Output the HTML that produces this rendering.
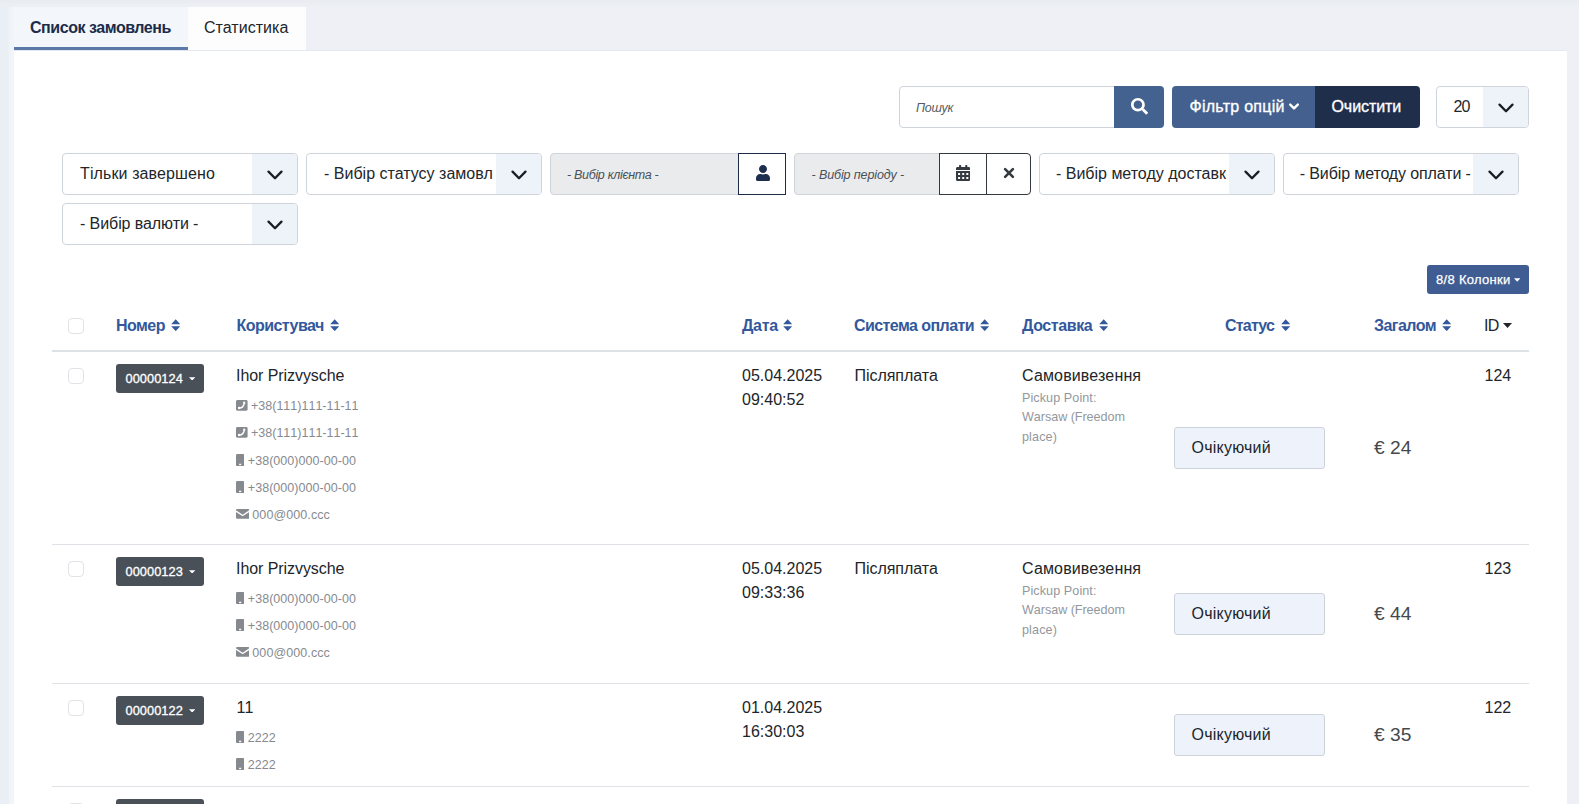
<!DOCTYPE html>
<html lang="uk">
<head>
<meta charset="utf-8">
<title>Список замовлень</title>
<style>
*{box-sizing:border-box;margin:0;padding:0}
html,body{width:1579px;height:804px;overflow:hidden}
body{background:#eef0f5;font-family:"Liberation Sans",sans-serif;color:#212529;position:relative;font-size:16px}
.abs{position:absolute}
.t{position:absolute;white-space:nowrap;line-height:1}
#main{left:14px;top:50px;width:1553px;height:754px;background:#fff}
#stripL{left:0;top:7px;width:14px;height:797px;background:linear-gradient(90deg,#e9eff4 0,#e9eff4 8px,#f1f4f8 10px,#f1f4f8 14px)}
#topband{left:0;top:0;width:1579px;height:7px;background:linear-gradient(180deg,#e8ebf0 0,#edf0f5 7px)}
#stripR{left:1567px;top:50px;width:12px;height:754px;background:#eef0f6}
#tab1{left:14px;top:7px;width:174px;height:43px;background:#f3f6fa}
#tab1u{left:14px;top:47px;width:174px;height:3px;background:#5a78a8}
#tab2{left:188px;top:7px;width:118px;height:43px;background:#fdfdfe}
#tabline{left:14px;top:50px;width:1553px;height:1px;background:#e4e9ef}
.box{position:absolute;height:42px;border:1px solid #ced4da;border-radius:4px;background:#fff}
.sel .arr{position:absolute;right:0;top:0;bottom:0;width:45px;background:#eef3fa;border-radius:0 3px 3px 0}
.sel svg{position:absolute;right:13.300px;top:15.300px}
.sel .lbl{position:absolute;left:17px;top:0;height:40px;line-height:40px;font-size:16px;white-space:nowrap;color:#22262a}
.ro{background:#e9ebed;border-radius:4px 0 0 4px}
.ro .lbl{position:absolute;left:16px;top:1px;line-height:41px;font-size:12.5px;font-style:italic;color:#495057;white-space:nowrap}
.ibtn{position:absolute;height:42px;border:1px solid #1c2b46;background:#fff}
.th{position:absolute;top:317px;font-weight:bold;font-size:16px;color:#33589c;white-space:nowrap;line-height:18px}
.hl{position:absolute;left:52px;width:1477px;height:1px;background:#dfe3e7}
.cb{position:absolute;left:68px;width:16px;height:16px;border:1px solid #e0e3e7;border-radius:4px;background:#fff}
.nbtn{position:absolute;left:116px;width:88px;height:29px;background:#495057;border-radius:3px;color:#fff;font-size:12.8px;line-height:29px;padding-left:9.5px;white-space:nowrap;font-kerning:none}
.nbtn span{position:relative;top:0;-webkit-text-stroke:0.300px #fff}
.name{position:absolute;left:236px;font-size:16px;line-height:20px;color:#212529;white-space:nowrap}
.sm{position:absolute;font-size:12.5px;line-height:16px;color:#868a8f;white-space:nowrap;font-kerning:none}
.dl{color:#93979c;font-size:12.6px}
.c{position:absolute;font-size:16px;line-height:20px;color:#212529;white-space:nowrap}
.st{position:absolute;left:1174px;width:151px;height:42px;background:#eef3fb;border:1px solid #ccd3db;border-radius:3px;font-size:16px;line-height:40px;padding-left:16.5px;color:#212529}
.tot{position:absolute;left:1374px;font-size:19.2px;line-height:22px;color:#45494d;white-space:nowrap}
</style>
</head>
<body>
<div class="abs" id="topband"></div><div class="abs" id="stripL"></div><div class="abs" id="stripR"></div><div class="abs" id="main"></div><div class="abs" id="tabline"></div>
<div class="abs" id="tab1"></div><div class="abs" id="tab1u"></div><div class="abs" id="tab2"></div>
<div class="t" id="tab1t" style="left:30px;top:19.600px;font-size:16px;font-weight:bold;color:#1b2c4b;letter-spacing:-0.456px">Список замовлень</div>
<div class="t" id="tab2t" style="left:204px;top:19.600px;font-size:16px;color:#212529;letter-spacing:0.040px">Статистика</div>
<div class="box" style="left:899px;top:86px;width:216px;border-radius:4px 0 0 4px"><span class="t" id="srch" style="left:16px;top:15px;font-size:12.5px;font-style:italic;color:#555b61;letter-spacing:-0.273px">Пошук</span></div>
<div class="abs" style="left:1114px;top:86px;width:50px;height:42px;background:#44628f;border-radius:0 4px 4px 0">
<svg class="abs" style="left:17px;top:12px" width="17" height="16.500" viewBox="0 0 512 512" preserveAspectRatio="none"><path fill="#fff" d="M505 442.700L405.300 343c-4.500-4.500-10.600-7-17-7H372c27.600-35.300 44-79.700 44-128C416 93.100 322.900 0 208 0S0 93.100 0 208s93.100 208 208 208c48.300 0 92.700-16.400 128-44v16.300c0 6.400 2.500 12.500 7 17l99.700 99.700c9.400 9.400 24.600 9.400 33.900 0l28.300-28.300c9.400-9.400 9.400-24.600.1-34zM208 336c-70.700 0-128-57.200-128-128 0-70.700 57.200-128 128-128 70.700 0 128 57.200 128 128 0 70.700-57.200 128-128 128z"/></svg>
</div>
<div class="abs" style="left:1172px;top:86px;width:143px;height:42px;background:#44608f;border-radius:4px 0 0 4px">
<span class="t" id="filt" style="left:17.500px;top:13.300px;font-size:16px;color:#fff;-webkit-text-stroke:0.350px #fff;letter-spacing:0.260px">Фільтр опцій</span>
<svg class="abs" style="left:116px;top:15.500px" width="12" height="10" viewBox="0 0 12 10"><path d="M2.200 2.600 L6 6.400 L9.800 2.600" fill="none" stroke="#fff" stroke-width="2.400" stroke-linecap="round" stroke-linejoin="round"/></svg>
</div>
<div class="abs" style="left:1315px;top:86px;width:105px;height:42px;background:#1e2e4b;border-radius:0 4px 4px 0">
<span class="t" id="clr" style="left:16.500px;top:13.300px;font-size:16px;color:#fff;-webkit-text-stroke:0.350px #fff;letter-spacing:-0.077px">Очистити</span></div>
<div class="box sel" style="left:1436px;top:86px;width:93px"><div class="arr"></div><span class="lbl" id="n20" style="left:16.500px;letter-spacing:-0.900px">20</span><svg width="18" height="12" viewBox="0 0 18 12"><path d="M2.500 2.600 L9 9.200 L15.500 2.600" fill="none" stroke="#1a1d21" stroke-width="2.300" stroke-linecap="round" stroke-linejoin="round"/></svg></div>
<div class="box sel" style="left:62px;top:153px;width:236px"><div class="arr"></div><span class="lbl" id="s1" style="left:17px;letter-spacing:0.108px">Тільки завершено</span><svg width="18" height="12" viewBox="0 0 18 12"><path d="M2.500 2.600 L9 9.200 L15.500 2.600" fill="none" stroke="#1a1d21" stroke-width="2.300" stroke-linecap="round" stroke-linejoin="round"/></svg></div>
<div class="box sel" style="left:306px;top:153px;width:236px"><div class="arr"></div><span class="lbl" id="s2" style="left:17px;letter-spacing:0.011px">- Вибір статусу замовл</span><svg width="18" height="12" viewBox="0 0 18 12"><path d="M2.500 2.600 L9 9.200 L15.500 2.600" fill="none" stroke="#1a1d21" stroke-width="2.300" stroke-linecap="round" stroke-linejoin="round"/></svg></div>
<div class="box ro" style="left:550px;top:153px;width:189px"><span class="lbl" id="cli" style="letter-spacing:-0.315px">- Вибір клієнта -</span></div>
<div class="ibtn" style="left:738px;top:153px;width:48px"><svg class="abs" style="left:16.500px;top:11.300px" width="14" height="16" viewBox="0 0 448 512" preserveAspectRatio="none"><path fill="#1c2f4f" d="M224 256c70.700 0 128-57.300 128-128S294.700 0 224 0 96 57.300 96 128s57.300 128 128 128zm89.600 32h-16.700c-22.200 10.200-46.900 16-72.900 16s-50.600-5.800-72.900-16h-16.700C60.200 288 0 348.200 0 422.400V464c0 26.500 21.500 48 48 48h352c26.500 0 48-21.500 48-48v-41.600c0-74.200-60.200-134.400-134.400-134.400z"/></svg></div>
<div class="box ro" style="left:794px;top:153px;width:146px"><span class="lbl" id="per" style="left:16.500px;letter-spacing:-0.102px">- Вибір періоду -</span></div>
<div class="ibtn" style="left:939px;top:153px;width:48px;border-color:#33383e"><svg class="abs" style="left:16.100px;top:10.800px" width="14.400" height="16" viewBox="0 0 448 512" preserveAspectRatio="none"><path fill="#343a40" d="M0 464c0 26.500 21.500 48 48 48h352c26.500 0 48-21.500 48-48V192H0v272zm320-196c0-6.600 5.400-12 12-12h40c6.600 0 12 5.400 12 12v40c0 6.600-5.400 12-12 12h-40c-6.600 0-12-5.400-12-12v-40zm0 128c0-6.600 5.400-12 12-12h40c6.600 0 12 5.400 12 12v40c0 6.600-5.400 12-12 12h-40c-6.600 0-12-5.400-12-12v-40zM192 268c0-6.600 5.400-12 12-12h40c6.600 0 12 5.400 12 12v40c0 6.600-5.400 12-12 12h-40c-6.600 0-12-5.400-12-12v-40zm0 128c0-6.600 5.400-12 12-12h40c6.600 0 12 5.400 12 12v40c0 6.600-5.400 12-12 12h-40c-6.600 0-12-5.400-12-12v-40zM64 268c0-6.600 5.400-12 12-12h40c6.600 0 12 5.400 12 12v40c0 6.600-5.400 12-12 12H76c-6.600 0-12-5.400-12-12v-40zm0 128c0-6.600 5.400-12 12-12h40c6.600 0 12 5.400 12 12v40c0 6.600-5.400 12-12 12H76c-6.600 0-12-5.400-12-12v-40zM400 64h-48V16c0-8.800-7.200-16-16-16h-32c-8.800 0-16 7.200-16 16v48H160V16c0-8.800-7.200-16-16-16h-32c-8.800 0-16 7.200-16 16v48H48C21.500 64 0 85.500 0 112v48h448v-48c0-26.500-21.500-48-48-48z"/></svg></div>
<div class="ibtn" style="left:986px;top:153px;width:45px;border-color:#33383e;border-radius:0 4px 4px 0"><svg class="abs" style="left:15.500px;top:13px" width="12" height="12" viewBox="0 0 12 12"><path d="M2.100 2.100 L9.900 9.900 M9.900 2.100 L2.100 9.900" stroke="#343a40" stroke-width="2.600" stroke-linecap="round"/></svg></div>
<div class="box sel" style="left:1039px;top:153px;width:236px"><div class="arr"></div><span class="lbl" id="s5" style="left:16px;letter-spacing:-0.008px">- Вибір методу доставк</span><svg width="18" height="12" viewBox="0 0 18 12"><path d="M2.500 2.600 L9 9.200 L15.500 2.600" fill="none" stroke="#1a1d21" stroke-width="2.300" stroke-linecap="round" stroke-linejoin="round"/></svg></div>
<div class="box sel" style="left:1283px;top:153px;width:236px"><div class="arr"></div><span class="lbl" id="s6" style="left:15.8px;letter-spacing:-0.123px">- Вибір методу оплати -</span><svg width="18" height="12" viewBox="0 0 18 12"><path d="M2.500 2.600 L9 9.200 L15.500 2.600" fill="none" stroke="#1a1d21" stroke-width="2.300" stroke-linecap="round" stroke-linejoin="round"/></svg></div>
<div class="box sel" style="left:62px;top:203px;width:236px"><div class="arr"></div><span class="lbl" id="s7" style="left:17px;letter-spacing:-0.084px">- Вибір валюти -</span><svg width="18" height="12" viewBox="0 0 18 12"><path d="M2.500 2.600 L9 9.200 L15.500 2.600" fill="none" stroke="#1a1d21" stroke-width="2.300" stroke-linecap="round" stroke-linejoin="round"/></svg></div>
<div class="abs" style="left:1427px;top:265px;width:102px;height:29px;background:#3f5c93;border-radius:3px"><span class="t" id="colbtn" style="left:9px;top:8px;font-size:13px;color:#fff;-webkit-text-stroke:0.250px #fff;letter-spacing:0.306px">8/8 Колонки</span><svg class="abs" style="left:87px;top:13px" width="6.400" height="4" viewBox="0 0 6 4" preserveAspectRatio="none"><path d="M0 0.300 L6 0.300 L3 3.800 Z" fill="#fff"/></svg></div>
<div class="cb" style="top:318px"></div>
<div class="th" style="left:116px"><span id="h1" style="letter-spacing:-0.537px">Номер</span><svg width="9.400" height="12.400" viewBox="0 0 9 13" preserveAspectRatio="none" style="position:absolute;top:2px;left:55px"><path fill="#33589c" d="M0.200 5.400 L4.500 0.300 L8.800 5.400 Z M0.200 7.600 L8.800 7.600 L4.500 12.700 Z"/></svg></div>
<div class="th" style="left:236.5px"><span id="h2" style="letter-spacing:-0.540px">Користувач</span><svg width="9.400" height="12.400" viewBox="0 0 9 13" preserveAspectRatio="none" style="position:absolute;top:2px;left:93.0px"><path fill="#33589c" d="M0.200 5.400 L4.500 0.300 L8.800 5.400 Z M0.200 7.600 L8.800 7.600 L4.500 12.700 Z"/></svg></div>
<div class="th" style="left:742px"><span id="h3" style="letter-spacing:-0.300px">Дата</span><svg width="9.400" height="12.400" viewBox="0 0 9 13" preserveAspectRatio="none" style="position:absolute;top:2px;left:41.39999999999998px"><path fill="#33589c" d="M0.200 5.400 L4.500 0.300 L8.800 5.400 Z M0.200 7.600 L8.800 7.600 L4.500 12.700 Z"/></svg></div>
<div class="th" style="left:854px"><span id="h4" style="letter-spacing:-0.566px">Система оплати</span><svg width="9.400" height="12.400" viewBox="0 0 9 13" preserveAspectRatio="none" style="position:absolute;top:2px;left:126.29999999999995px"><path fill="#33589c" d="M0.200 5.400 L4.500 0.300 L8.800 5.400 Z M0.200 7.600 L8.800 7.600 L4.500 12.700 Z"/></svg></div>
<div class="th" style="left:1022px"><span id="h5" style="letter-spacing:-0.413px">Доставка</span><svg width="9.400" height="12.400" viewBox="0 0 9 13" preserveAspectRatio="none" style="position:absolute;top:2px;left:77.29999999999995px"><path fill="#33589c" d="M0.200 5.400 L4.500 0.300 L8.800 5.400 Z M0.200 7.600 L8.800 7.600 L4.500 12.700 Z"/></svg></div>
<div class="th" style="left:1225px"><span id="h6" style="letter-spacing:-0.792px">Статус</span><svg width="9.400" height="12.400" viewBox="0 0 9 13" preserveAspectRatio="none" style="position:absolute;top:2px;left:55.700000000000045px"><path fill="#33589c" d="M0.200 5.400 L4.500 0.300 L8.800 5.400 Z M0.200 7.600 L8.800 7.600 L4.500 12.700 Z"/></svg></div>
<div class="th" style="left:1374px"><span id="h7" style="letter-spacing:-0.540px">Загалом</span><svg width="9.400" height="12.400" viewBox="0 0 9 13" preserveAspectRatio="none" style="position:absolute;top:2px;left:68.29999999999995px"><path fill="#33589c" d="M0.200 5.400 L4.500 0.300 L8.800 5.400 Z M0.200 7.600 L8.800 7.600 L4.500 12.700 Z"/></svg></div>
<div class="th" style="left:1484px;font-weight:normal;color:#212529"><span id="h8" style="letter-spacing:-0.700px">ID</span><svg width="9" height="5" viewBox="0 0 9 5" style="position:absolute;top:5.500px;left:19.300px"><path d="M0 0 L9 0 L4.500 5 Z" fill="#212529"/></svg></div>
<div class="hl" style="top:350px;height:2px;background:#dde2e7"></div>
<div class="cb" style="top:368px"></div>
<div class="nbtn" style="top:364px"><span id="nba" style="letter-spacing:0.047px">00000124</span><svg width="6.400" height="3.800" viewBox="0 0 6 4" preserveAspectRatio="none" style="position:absolute;left:73px;top:12.700px"><path d="M0 0.200 L6 0.200 L3 3.800 Z" fill="#fff"/></svg></div>
<div class="name" id="nma" style="top:366px;letter-spacing:-0.064px">Ihor Prizvysche</div>
<div class="sm ct" style="left:236px;top:398px;padding-left:15px"><svg width="11.600" height="10.800" viewBox="0 0 12 11" preserveAspectRatio="none" style="position:absolute;left:0;top:2.200px"><rect x="0" y="0" width="12" height="11" rx="1.500" fill="#868a8f"/><path d="M8.400 3 C8.600 6 6.200 8.300 3.300 8.200" fill="none" stroke="#fff" stroke-width="1.500"/><path d="M7.400 1.700 L9.400 1.500 L9.600 3.700 L7.600 3.900 Z M2 7.200 L4.100 7 L4.300 9.100 L2.200 9.400 Z" fill="#fff"/></svg><span id="ph1_1" style="letter-spacing:0.010px">+38(111)111-11-11</span></div>
<div class="sm ct" style="left:236px;top:425px;padding-left:15px"><svg width="11.600" height="10.800" viewBox="0 0 12 11" preserveAspectRatio="none" style="position:absolute;left:0;top:2.200px"><rect x="0" y="0" width="12" height="11" rx="1.500" fill="#868a8f"/><path d="M8.400 3 C8.600 6 6.200 8.300 3.300 8.200" fill="none" stroke="#fff" stroke-width="1.500"/><path d="M7.400 1.700 L9.400 1.500 L9.600 3.700 L7.600 3.900 Z M2 7.200 L4.100 7 L4.300 9.100 L2.200 9.400 Z" fill="#fff"/></svg><span id="ph1_2" style="letter-spacing:0.010px">+38(111)111-11-11</span></div>
<div class="sm ct" style="left:236px;top:453px;padding-left:11.8px"><svg width="8.300" height="12.200" viewBox="0 0 8 12" preserveAspectRatio="none" style="position:absolute;left:0;top:1.100px"><rect x="0" y="0" width="8" height="12" rx="1.300" fill="#868a8f"/><rect x="3" y="9.600" width="2" height="1.400" fill="#fff"/></svg><span id="ph0_3" style="letter-spacing:0.046px">+38(000)000-00-00</span></div>
<div class="sm ct" style="left:236px;top:480px;padding-left:11.8px"><svg width="8.300" height="12.200" viewBox="0 0 8 12" preserveAspectRatio="none" style="position:absolute;left:0;top:1.100px"><rect x="0" y="0" width="8" height="12" rx="1.300" fill="#868a8f"/><rect x="3" y="9.600" width="2" height="1.400" fill="#fff"/></svg><span id="ph0_4" style="letter-spacing:0.046px">+38(000)000-00-00</span></div>
<div class="sm ct" style="left:236px;top:507px;padding-left:16.3px"><svg width="13.300" height="9.800" viewBox="0 0 13 10" preserveAspectRatio="none" style="position:absolute;left:0;top:2.300px"><rect x="0" y="0" width="13" height="10" rx="1.200" fill="#868a8f"/><path d="M0 2.200 L6.500 6.600 L13 2.200" fill="none" stroke="#fff" stroke-width="1.400"/></svg><span id="ml_5" style="letter-spacing:0.090px">000@000.ccc</span></div>
<div class="c" id="d1a" style="left:742px;top:366px">05.04.2025</div>
<div class="c" id="d2a" style="left:742px;top:390px">09:40:52</div>
<div class="c" id="paya" style="left:854.500px;top:366px;letter-spacing:-0.040px">Післяплата</div>
<div class="c" id="dva" style="left:1022px;top:366px;letter-spacing:0.150px">Самовивезення</div>
<div class="sm dl" id="dl0a" style="left:1022px;top:389.8px;letter-spacing:0.076px">Pickup Point:</div>
<div class="sm dl" id="dl1a" style="left:1022px;top:409.2px;letter-spacing:-0.050px">Warsaw (Freedom</div>
<div class="sm dl" id="dl2a" style="left:1022px;top:428.6px;letter-spacing:0.108px">place)</div>
<div class="c" id="ida" style="left:1484.500px;top:366px">124</div>
<div class="st" style="top:427px"><span id="sta" style="letter-spacing:0.225px">Очікуючий</span></div><div class="tot" id="tota" style="top:437px">€ 24</div><div class="hl" style="top:544px"></div>
<div class="cb" style="top:561px"></div>
<div class="nbtn" style="top:557px"><span id="nbb" style="letter-spacing:0.047px">00000123</span><svg width="6.400" height="3.800" viewBox="0 0 6 4" preserveAspectRatio="none" style="position:absolute;left:73px;top:12.700px"><path d="M0 0.200 L6 0.200 L3 3.800 Z" fill="#fff"/></svg></div>
<div class="name" id="nmb" style="top:559px;letter-spacing:-0.064px">Ihor Prizvysche</div>
<div class="sm ct" style="left:236px;top:591px;padding-left:11.8px"><svg width="8.300" height="12.200" viewBox="0 0 8 12" preserveAspectRatio="none" style="position:absolute;left:0;top:1.100px"><rect x="0" y="0" width="8" height="12" rx="1.300" fill="#868a8f"/><rect x="3" y="9.600" width="2" height="1.400" fill="#fff"/></svg><span id="ph0_6" style="letter-spacing:0.046px">+38(000)000-00-00</span></div>
<div class="sm ct" style="left:236px;top:618px;padding-left:11.8px"><svg width="8.300" height="12.200" viewBox="0 0 8 12" preserveAspectRatio="none" style="position:absolute;left:0;top:1.100px"><rect x="0" y="0" width="8" height="12" rx="1.300" fill="#868a8f"/><rect x="3" y="9.600" width="2" height="1.400" fill="#fff"/></svg><span id="ph0_7" style="letter-spacing:0.046px">+38(000)000-00-00</span></div>
<div class="sm ct" style="left:236px;top:645px;padding-left:16.3px"><svg width="13.300" height="9.800" viewBox="0 0 13 10" preserveAspectRatio="none" style="position:absolute;left:0;top:2.300px"><rect x="0" y="0" width="13" height="10" rx="1.200" fill="#868a8f"/><path d="M0 2.200 L6.500 6.600 L13 2.200" fill="none" stroke="#fff" stroke-width="1.400"/></svg><span id="ml_8" style="letter-spacing:0.090px">000@000.ccc</span></div>
<div class="c" id="d1b" style="left:742px;top:559px">05.04.2025</div>
<div class="c" id="d2b" style="left:742px;top:583px">09:33:36</div>
<div class="c" id="payb" style="left:854.500px;top:559px;letter-spacing:-0.040px">Післяплата</div>
<div class="c" id="dvb" style="left:1022px;top:559px;letter-spacing:0.150px">Самовивезення</div>
<div class="sm dl" id="dl0b" style="left:1022px;top:582.8px;letter-spacing:0.076px">Pickup Point:</div>
<div class="sm dl" id="dl1b" style="left:1022px;top:602.2px;letter-spacing:-0.050px">Warsaw (Freedom</div>
<div class="sm dl" id="dl2b" style="left:1022px;top:621.6px;letter-spacing:0.108px">place)</div>
<div class="c" id="idb" style="left:1484.500px;top:559px">123</div>
<div class="st" style="top:593px"><span style="letter-spacing:0.225px">Очікуючий</span></div><div class="tot" style="top:603px">€ 44</div><div class="hl" style="top:683px"></div>
<div class="cb" style="top:700px"></div>
<div class="nbtn" style="top:696px"><span id="nbc" style="letter-spacing:0.047px">00000122</span><svg width="6.400" height="3.800" viewBox="0 0 6 4" preserveAspectRatio="none" style="position:absolute;left:73px;top:12.700px"><path d="M0 0.200 L6 0.200 L3 3.800 Z" fill="#fff"/></svg></div>
<div class="name" id="nmc" style="top:698px;font-kerning:none;letter-spacing:-0.8px;left:236.500px">11</div>
<div class="sm ct" style="left:236px;top:730px;padding-left:11.8px"><svg width="8.300" height="12.200" viewBox="0 0 8 12" preserveAspectRatio="none" style="position:absolute;left:0;top:1.100px"><rect x="0" y="0" width="8" height="12" rx="1.300" fill="#868a8f"/><rect x="3" y="9.600" width="2" height="1.400" fill="#fff"/></svg><span id="p2_9" style="">2222</span></div>
<div class="sm ct" style="left:236px;top:757px;padding-left:11.8px"><svg width="8.300" height="12.200" viewBox="0 0 8 12" preserveAspectRatio="none" style="position:absolute;left:0;top:1.100px"><rect x="0" y="0" width="8" height="12" rx="1.300" fill="#868a8f"/><rect x="3" y="9.600" width="2" height="1.400" fill="#fff"/></svg><span id="p2_10" style="">2222</span></div>
<div class="c" id="d1c" style="left:742px;top:698px">01.04.2025</div>
<div class="c" id="d2c" style="left:742px;top:722px">16:30:03</div>
<div class="c" id="idc" style="left:1484.500px;top:698px">122</div>
<div class="st" style="top:714px"><span style="letter-spacing:0.225px">Очікуючий</span></div><div class="tot" style="top:724px">€ 35</div><div class="hl" style="top:786px"></div>
<div class="cb" style="top:803px"></div><div class="nbtn" style="top:799px">00000121</div>
</body>
</html>
